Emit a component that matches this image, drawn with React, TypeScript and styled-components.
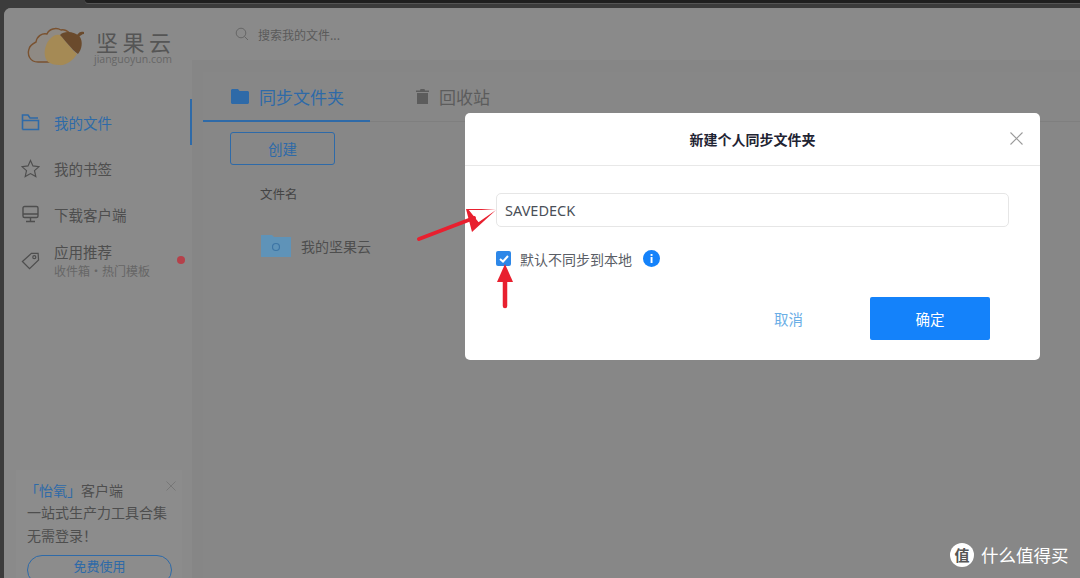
import React from "react";
import styled, { createGlobalStyle } from "styled-components";

const Global = createGlobalStyle`
  html, body { margin: 0; padding: 0; background: #3a3a3a; overflow: hidden; }
  * { box-sizing: border-box; }
  #root { width: 1080px; height: 578px; }
`;

const CJK = `"Noto Sans CJK SC", "Liberation Sans", sans-serif`;

const Page = styled.div`
  position: relative;
  width: 1080px;
  height: 578px;
  overflow: hidden;
  background: #3c3c3c;
  font-family: ${CJK};
  display: flex;
  flex-direction: column;
`;
const TopStrip = styled.div`
  height: 8px;
  flex: none;
  padding-left: 85px;
`;
const TopNotch = styled.div`
  height: 3px;
  background: #1f1f1f;
  border-bottom-left-radius: 6px;
  box-shadow: 0 1px 0 #555;
`;
const Window = styled.div`
  flex: 1;
  margin-left: 4px;
  display: flex;
  background: #868686;
  border-top-left-radius: 7px;
  overflow: hidden;
  min-height: 0;
`;
const Sidebar = styled.aside`
  width: 188px;
  flex: none;
  display: flex;
  flex-direction: column;
  background: #8a8a8a;
`;
const Logo = styled.div`
  height: 91px;
  flex: none;
  display: flex;
  align-items: flex-start;
  padding: 17px 0 0 23px;
  gap: 0;
`;
const LogoText = styled.div`
  display: flex;
  flex-direction: column;
  margin-left: 1px;
  padding-top: 4px;
`;
const LogoName = styled.div`
  font-size: 22px;
  line-height: 24px;
  letter-spacing: 4.5px;
  color: #555;
  white-space: nowrap;
`;
const LogoUrl = styled.div`
  font-family: "Open Sans", "Liberation Sans", sans-serif;
  font-size: 10.5px;
  line-height: 12px;
  color: #666;
  margin-left: -2px;
`;
const NavItem = styled.div<{ $active?: boolean }>`
  height: 46px;
  flex: none;
  display: flex;
  align-items: center;
  padding-left: 17px;
  position: relative;
  border-right: 2px solid ${(p) => (p.$active ? "#2e6aa8" : "transparent")};
  color: ${(p) => (p.$active ? "#2e6aa8" : "#4e4e4e")};
  width: 188px;
  svg { flex: none; }
`;
const NavLabels = styled.div`
  margin-left: 14px;
  display: flex;
  flex-direction: column;
`;
const NavLabel = styled.div`
  font-size: 14.5px;
  line-height: 21px;
  white-space: nowrap;
`;
const NavSub = styled.div`
  font-size: 12px;
  line-height: 18px;
  color: #666;
  white-space: nowrap;
`;
const Dot = styled.span`
  position: absolute;
  right: 5px;
  top: 19px;
  width: 8px;
  height: 8px;
  border-radius: 50%;
  background: #b5414a;
`;
const Promo = styled.div`
  margin: auto 0 0 12px;
  width: 166px;
  height: 108px;
  position: relative;
  padding: 9px 10px 0 11px;
  background: #8c8c8c;
  flex: none;
`;
const PromoTitle = styled.div`
  font-size: 14px;
  line-height: 22px;
  color: #4e4e4e;
  white-space: nowrap;
  margin-left: -2px;
`;
const PromoBrand = styled.span`
  color: #2e6aa8;
`;
const PromoText = styled.div`
  font-size: 14px;
  line-height: 23px;
  color: #4e4e4e;
`;
const PromoClose = styled.div`
  position: absolute;
  right: 6px;
  top: 2px;
  color: #777;
`;
const PromoButton = styled.div`
  margin-top: 8px;
  height: 30px;
  border: 1px solid #2e6aa8;
  border-radius: 15px;
  text-align: center;
  font-size: 13px;
  line-height: 20px;
  color: #2e6aa8;
`;
const Main = styled.main`
  flex: 1;
  display: flex;
  flex-direction: column;
  min-width: 0;
`;
const SearchBar = styled.div`
  height: 52px;
  flex: none;
  display: flex;
  align-items: center;
  padding-left: 43px;
  background: #8a8a8a;
  color: #666;
`;
const SearchText = styled.span`
  margin-left: 9px;
  font-size: 12px;
  color: #5a5a5a;
`;
const Panel = styled.section`
  flex: 1;
  margin: 12px 0 0 11px;
  background: #878787;
  display: flex;
  flex-direction: column;
`;
const Tabs = styled.div`
  height: 50px;
  flex: none;
  display: flex;
  border-bottom: 1px solid #7f7f7f;
`;
const Tab = styled.div<{ $active?: boolean }>`
  width: 167px;
  height: 50px;
  display: flex;
  align-items: center;
  gap: 10px;
  padding-left: ${(p) => (p.$active ? "28px" : "46px")};
  font-size: 17px;
  color: ${(p) => (p.$active ? "#2e6aa8" : "#5c5c5c")};
  border-bottom: 2px solid ${(p) => (p.$active ? "#2e6aa8" : "transparent")};
`;
const Toolbar = styled.div`
  padding: 10px 0 0 27px;
  flex: none;
`;
const CreateButton = styled.div`
  width: 105px;
  height: 33px;
  border: 1px solid #2e6aa8;
  border-radius: 3px;
  display: flex;
  align-items: center;
  justify-content: center;
  font-size: 14.5px;
  color: #2e6aa8;
`;
const ColumnHead = styled.div`
  padding: 18px 0 0 57px;
  font-size: 12.5px;
  line-height: 21px;
  color: #444;
`;
const FileRow = styled.div`
  margin-top: 30px;
  padding-left: 58px;
  display: flex;
  align-items: center;
  gap: 10px;
  font-size: 14px;
  color: #4e4e4e;
`;
const Dialog = styled.div`
  position: absolute;
  left: 465px;
  top: 113px;
  width: 575px;
  height: 247px;
  background: #fff;
  border-radius: 5px;
  display: flex;
  flex-direction: column;
`;
const DialogHeader = styled.div`
  height: 53px;
  flex: none;
  display: flex;
  align-items: center;
  justify-content: center;
  border-bottom: 1px solid #e8e8e8;
  position: relative;
  font-size: 14px;
  font-weight: 700;
  color: #1f2433;
`;
const CloseIcon = styled.div`
  position: absolute;
  right: 17px;
  top: 19px;
  line-height: 0;
  color: #9a9a9a;
`;
const DialogBody = styled.div`
  flex: 1;
  padding: 27px 31px 0;
  display: flex;
  flex-direction: column;
`;
const NameInput = styled.div`
  width: 513px;
  height: 34px;
  border: 1px solid #e6e6e6;
  border-radius: 5px;
  display: flex;
  align-items: center;
  padding-left: 8px;
  font-size: 14.5px;
  color: #4a4f58;
  font-family: "Noto Sans", "Liberation Sans", sans-serif;
`;
const CheckRow = styled.div`
  margin-top: 23px;
  display: flex;
  align-items: center;
  height: 17px;
  font-size: 14px;
  color: #5a5e66;
`;
const Checkbox = styled.div`
  width: 15px;
  height: 15px;
  border-radius: 2px;
  background: #2d87e8;
  display: flex;
  align-items: center;
  justify-content: center;
  margin-right: 9px;
`;
const InfoIcon = styled.div`
  width: 17px;
  height: 17px;
  margin-left: 11px;
  line-height: 0;
`;
const Actions = styled.div`
  margin-top: 30px;
  display: flex;
  align-items: center;
  justify-content: flex-end;
  padding-right: 19px;
`;
const CancelButton = styled.div`
  font-size: 14.5px;
  color: #6aaee6;
  margin-right: 67px;
`;
const ConfirmButton = styled.div`
  width: 120px;
  height: 43px;
  border-radius: 2px;
  background: #1482fa;
  color: #fff;
  font-size: 14.5px;
  display: flex;
  align-items: center;
  justify-content: center;
`;
const Arrows = styled.svg`
  position: absolute;
  left: 410px;
  top: 200px;
`;
const Watermark = styled.div`
  position: absolute;
  left: 950px;
  top: 543px;
  display: flex;
  align-items: center;
  gap: 7px;
  color: #fff;
  font-size: 17.5px;
  line-height: 24px;
  white-space: nowrap;
`;
const WatermarkBadge = styled.div`
  width: 24px;
  height: 24px;
  border-radius: 50%;
  background: #fff;
  color: #555;
  font-size: 15px;
  font-weight: 700;
  display: flex;
  align-items: center;
  justify-content: center;
`;

const Acorn = () => (
  <svg width="68" height="42" viewBox="0 0 68 42">
    <path d="M24 37 H11 C3 37 0 30 2 24 C3 20 7 18 9 17 C10 11 15 8 20 9 C22 4 29 2 34 5 C37 4 41 6 43 9" fill="#8f8a84" stroke="#7a5230" strokeWidth="1.4" />
    <path d="M23 38 C15 34 17 20 23 14 C26 10 30 9 33 10 C38 15 44 24 50 29 C46 36 38 41 32 40 C28 40 25 39 23 38 Z" fill="#a58a55" />
    <path d="M33 10 C38 5 48 7 53 12 C56 17 55 24 51 29 C44 24 38 15 33 10 Z" fill="#6a4a2c" />
    <path d="M50 10 C52 7 54 6 57 7 L57 9 C55 9 53 11 52 12 Z" fill="#6a4a2c" />
  </svg>
);

export default function App() {
  return (
    <Page>
      <Global />
      <TopStrip><TopNotch /></TopStrip>
      <Window>
        <Sidebar>
          <Logo>
            <Acorn />
            <LogoText>
              <LogoName>坚果云</LogoName>
              <LogoUrl>jianguoyun.com</LogoUrl>
            </LogoText>
          </Logo>
          <NavItem $active>
            <svg width="19" height="18" viewBox="0 0 19 18" fill="none" stroke="currentColor" strokeWidth="1.6">
              <path d="M1.5 16.5 V2 H7 L9 5 H17 M1.5 7.5 H17.5 V16.5 H1.5" />
            </svg>
            <NavLabels><NavLabel>我的文件</NavLabel></NavLabels>
          </NavItem>
          <NavItem>
            <svg width="19" height="19" viewBox="0 0 20 20" fill="none" stroke="currentColor" strokeWidth="1.2">
              <path d="M10 1.5 L12.6 7.3 L19 8 L14.2 12.2 L15.6 18.5 L10 15.3 L4.4 18.5 L5.8 12.2 L1 8 L7.4 7.3 Z" />
            </svg>
            <NavLabels><NavLabel>我的书签</NavLabel></NavLabels>
          </NavItem>
          <NavItem>
            <svg width="19" height="18" viewBox="0 0 19 18" fill="none" stroke="currentColor" strokeWidth="1.4">
              <rect x="2" y="1.5" width="15" height="11" rx="1.5" />
              <path d="M2 9 H17 M9.5 12.5 V16 M5 16.5 H14" />
            </svg>
            <NavLabels><NavLabel>下载客户端</NavLabel></NavLabels>
          </NavItem>
          <NavItem>
            <svg width="19" height="19" viewBox="0 0 20 20" fill="none" stroke="currentColor" strokeWidth="1.3">
              <path d="M1.5 11 L11 2.5 L18 2.5 L18.5 9.5 L9 18.5 Z" />
              <circle cx="14" cy="6.5" r="1.6" />
            </svg>
            <NavLabels>
              <NavLabel>应用推荐</NavLabel>
              <NavSub>收件箱·热门模板</NavSub>
            </NavLabels>
            <Dot />
          </NavItem>
          <Promo>
            <PromoClose>
              <svg width="10" height="10" viewBox="0 0 10 10" stroke="currentColor" strokeWidth="1"><path d="M0.5 0.5 L9.5 9.5 M9.5 0.5 L0.5 9.5" /></svg>
            </PromoClose>
            <PromoTitle><PromoBrand>「怡氧」</PromoBrand>客户端</PromoTitle>
            <PromoText>一站式生产力工具合集 无需登录！</PromoText>
            <PromoButton>免费使用</PromoButton>
          </Promo>
        </Sidebar>
        <Main>
          <SearchBar>
            <svg width="14" height="14" viewBox="0 0 14 14" fill="none" stroke="currentColor" strokeWidth="1"><circle cx="6" cy="6" r="4.8" /><path d="M9.5 9.5 L13 13" /></svg>
            <SearchText>搜索我的文件...</SearchText>
          </SearchBar>
          <Panel>
            <Tabs>
              <Tab $active>
                <svg width="18" height="15" viewBox="0 0 18 15" fill="currentColor"><path d="M0 1.5 C0 .7 .7 0 1.5 0 H7 L8.5 2 H16.5 C17.3 2 18 2.7 18 3.5 V13.5 C18 14.3 17.3 15 16.5 15 H1.5 C.7 15 0 14.3 0 13.5 Z" /></svg>
                同步文件夹
              </Tab>
              <Tab>
                <svg width="13" height="15" viewBox="0 0 13 15" fill="currentColor"><path d="M4.5 0 H8.5 L9 1.5 H13 V3 H0 V1.5 H4 Z M1 4 H12 V15 H1 Z" /></svg>
                回收站
              </Tab>
            </Tabs>
            <Toolbar><CreateButton>创建</CreateButton></Toolbar>
            <ColumnHead>文件名</ColumnHead>
            <FileRow>
              <svg width="30" height="23" viewBox="0 0 30 23">
                <path d="M0 1 H11 L13 3 H30 V23 H0 Z" fill="#5f93b8" />
                <circle cx="15" cy="13" r="3.5" fill="none" stroke="#3d75a5" strokeWidth="1.2" />
              </svg>
              我的坚果云
            </FileRow>
          </Panel>
        </Main>
      </Window>

      <Dialog>
        <DialogHeader>
          新建个人同步文件夹
          <CloseIcon>
            <svg width="13" height="13" viewBox="0 0 13 13" stroke="currentColor" strokeWidth="1.1"><path d="M.5 .5 L12.5 12.5 M12.5 .5 L.5 12.5" /></svg>
          </CloseIcon>
        </DialogHeader>
        <DialogBody>
          <NameInput>SAVEDECK</NameInput>
          <CheckRow>
            <Checkbox>
              <svg width="10" height="8" viewBox="0 0 10 8" fill="none" stroke="#fff" strokeWidth="2"><path d="M1 4 L4 6.5 L9 1" /></svg>
            </Checkbox>
            默认不同步到本地
            <InfoIcon>
              <svg width="17" height="17" viewBox="0 0 17 17">
                <circle cx="8.5" cy="8.5" r="8.5" fill="#1482fa" />
                <rect x="7.6" y="7" width="1.9" height="6" fill="#fff" />
                <rect x="7.6" y="4" width="1.9" height="1.9" fill="#fff" />
              </svg>
            </InfoIcon>
          </CheckRow>
          <Actions>
            <CancelButton>取消</CancelButton>
            <ConfirmButton>确定</ConfirmButton>
          </Actions>
        </DialogBody>
      </Dialog>

      <Arrows width="110" height="115" viewBox="0 0 110 115">
        <path d="M9 39 L64 18" stroke="#e8202f" strokeWidth="4" strokeLinecap="round" />
        <path d="M86 10 L58 9 L70 24 L66 24 Z M86 10 L62 32 L56 9 Z" fill="#e8202f" />
        <path d="M95 106 L95 78" stroke="#e8202f" strokeWidth="4.5" strokeLinecap="round" />
        <path d="M95 64 L103 82 L87 82 Z" fill="#e8202f" />
      </Arrows>

      <Watermark>
        <WatermarkBadge>值</WatermarkBadge>
        什么值得买
      </Watermark>
    </Page>
  );
}
